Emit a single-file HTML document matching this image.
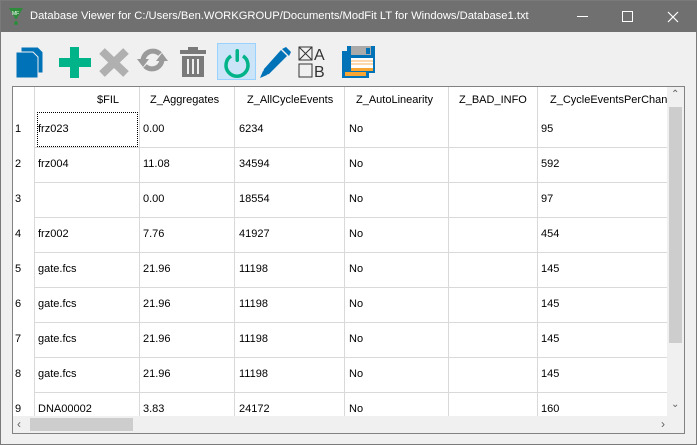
<!DOCTYPE html>
<html><head><style>
*{margin:0;padding:0;box-sizing:border-box}
body{width:697px;height:445px;background:#f0f0f0;font-family:"Liberation Sans",sans-serif;font-size:11px;color:#000;position:relative;overflow:hidden;border:1px solid #7a7a7a}
.title{position:absolute;left:0;top:0;width:697px;height:31px;background:#707070;color:#fff;font-size:11px}
.title span{position:absolute;left:29px;top:9px;font-size:11.2px}
.ic{position:absolute}
.grid{position:absolute;left:11px;top:85px;width:673px;height:348px;border:1px solid #828282;background:#fff;overflow:hidden}
.c{position:absolute;white-space:nowrap}
.vl{position:absolute;width:1px;background:#d9d9d9}
.hl{position:absolute;height:1px;background:#d9d9d9}
</style></head><body>
<div class="title">
<svg class="ic" style="left:7px;top:5px" width="16" height="20"><polygon points="1,2 15,2 8,14" fill="#2e8b3c"/><text x="4" y="9" font-size="5" fill="#fff" font-family="Liberation Sans">MF</text><circle cx="8" cy="17" r="2" fill="#2e8b3c"/></svg>
<span>Database Viewer for C:/Users/Ben.WORKGROUP/Documents/ModFit LT for Windows/Database1.txt</span>
<div class="ic" style="left:576px;top:15px;width:11px;height:1px;background:#fff"></div>
<div class="ic" style="left:621px;top:10px;width:11px;height:11px;border:1px solid #fff"></div>
<svg class="ic" style="left:666px;top:10px" width="12" height="12"><path d="M1 1L11 11M11 1L1 11" stroke="#fff" stroke-width="1.2"/></svg>
</div>
<svg class="ic" style="left:14px;top:45px" width="32" height="33"><path d="M6 1h17l5 5v21H6z" fill="#0072b8" stroke="#f0f0f0" stroke-width="1"/><path d="M1 6h17l5 5v21H1z" fill="#0072b8" stroke="#f0f0f0" stroke-width="1"/></svg>
<svg class="ic" style="left:57px;top:45px" width="34" height="33"><rect x="12" y="1" width="9" height="31" fill="#00b388"/><rect x="1" y="12" width="32" height="9" fill="#00b388"/></svg>
<svg class="ic" style="left:97px;top:46px" width="32" height="31"><path d="M4 4L28 27M28 4L4 27" stroke="#b0b0b0" stroke-width="8"/></svg>
<svg class="ic" style="left:135px;top:46px" width="33" height="27"><path d="M7 15A10 10 0 0 1 24 7" fill="none" stroke="#9a9a9a" stroke-width="5"/><path d="M26 11A10 10 0 0 1 9 19" fill="none" stroke="#9a9a9a" stroke-width="5"/><polygon points="1,12 13,12 7,20" fill="#9a9a9a"/><polygon points="20,14 32,14 26,6" fill="#9a9a9a"/></svg>
<svg class="ic" style="left:178px;top:45px" width="28" height="32"><rect x="9" y="1" width="10" height="3" fill="#7a7a7a"/><rect x="1" y="4" width="26" height="4" fill="#7a7a7a"/><path d="M3 10h22v21H3z" fill="#7a7a7a"/><rect x="8" y="13" width="2" height="15" fill="#f0f0f0"/><rect x="13" y="13" width="2" height="15" fill="#f0f0f0"/><rect x="18" y="13" width="2" height="15" fill="#f0f0f0"/></svg>
<div class="ic" style="left:216px;top:42px;width:39px;height:37px;background:#cce4f7;border:1px solid #99d1ff"></div>
<svg class="ic" style="left:220px;top:45px" width="32" height="32"><path d="M10 10A11 11 0 1 0 22 10" fill="none" stroke="#00b388" stroke-width="3.5"/><rect x="14.5" y="3" width="3.5" height="13" rx="1.7" fill="#00b388"/></svg>
<svg class="ic" style="left:258px;top:45px" width="33" height="33"><path d="M22 4L28 10L10 28L3 30L5 23Z" fill="#0072b8"/><path d="M23 3l4-2 5 5-2 4z" fill="#0072b8"/><path d="M1 32l3-7 4 4z" fill="#0072b8"/></svg>
<svg class="ic" style="left:297px;top:45px" width="32" height="33"><rect x="1" y="1" width="13" height="13" fill="none" stroke="#333"/><path d="M1 1L14 14M14 1L1 14" stroke="#333"/><rect x="1" y="18" width="13" height="13" fill="none" stroke="#333"/><text x="16" y="14" font-size="16" font-family="Liberation Sans" fill="#333">A</text><text x="16" y="31" font-size="16" font-family="Liberation Sans" fill="#333">B</text></svg>
<svg class="ic" style="left:340px;top:44px" width="35" height="35"><rect x="1" y="6" width="27" height="27" fill="#0072b8"/><rect x="6" y="1" width="28" height="27" fill="#0072b8"/><rect x="10" y="1" width="20" height="9" fill="#aaa"/><rect x="25" y="3" width="4" height="6" fill="#0072b8"/><rect x="10" y="13" width="22" height="10" fill="#fff"/><path d="M10 16h22M10 19h22" stroke="#f7b05b"/><rect x="10" y="23" width="22" height="3" fill="#f7a533"/><rect x="4" y="27" width="21" height="4" fill="#f7a533"/></svg>
<div class="grid">
<div class="vl" style="left:21px;top:0;height:330px"></div>
<div class="vl" style="left:126px;top:0;height:330px"></div>
<div class="vl" style="left:221px;top:0;height:330px"></div>
<div class="vl" style="left:331px;top:0;height:330px"></div>
<div class="vl" style="left:435px;top:0;height:330px"></div>
<div class="vl" style="left:524px;top:0;height:330px"></div>
<div class="hl" style="left:22px;top:60px;width:632px"></div>
<div class="hl" style="left:22px;top:95px;width:632px"></div>
<div class="hl" style="left:22px;top:130px;width:632px"></div>
<div class="hl" style="left:22px;top:165px;width:632px"></div>
<div class="hl" style="left:22px;top:200px;width:632px"></div>
<div class="hl" style="left:22px;top:235px;width:632px"></div>
<div class="hl" style="left:22px;top:270px;width:632px"></div>
<div class="hl" style="left:22px;top:305px;width:632px"></div>
<div class="c" style="left:84px;top:7px">$FIL</div>
<div class="c" style="left:137px;top:7px">Z_Aggregates</div>
<div class="c" style="left:234px;top:7px">Z_AllCycleEvents</div>
<div class="c" style="left:343px;top:7px">Z_AutoLinearity</div>
<div class="c" style="left:446px;top:7px">Z_BAD_INFO</div>
<div class="c" style="left:537px;top:7px">Z_CycleEventsPerChan</div>
<div style="position:absolute;left:24px;top:25px;width:101px;height:35px;border:1px dotted #000"></div>
<div style="position:absolute;left:0;top:25px;width:654px;line-height:35px">
<div style="position:relative;height:35px"><span class="c" style="left:2px">1</span><span class="c" style="left:25px">frz023</span><span class="c" style="left:130px">0.00</span><span class="c" style="left:226px">6234</span><span class="c" style="left:336px">No</span><span class="c" style="left:528px">95</span></div>
<div style="position:relative;height:35px"><span class="c" style="left:2px">2</span><span class="c" style="left:25px">frz004</span><span class="c" style="left:130px">11.08</span><span class="c" style="left:226px">34594</span><span class="c" style="left:336px">No</span><span class="c" style="left:528px">592</span></div>
<div style="position:relative;height:35px"><span class="c" style="left:2px">3</span><span class="c" style="left:130px">0.00</span><span class="c" style="left:226px">18554</span><span class="c" style="left:336px">No</span><span class="c" style="left:528px">97</span></div>
<div style="position:relative;height:35px"><span class="c" style="left:2px">4</span><span class="c" style="left:25px">frz002</span><span class="c" style="left:130px">7.76</span><span class="c" style="left:226px">41927</span><span class="c" style="left:336px">No</span><span class="c" style="left:528px">454</span></div>
<div style="position:relative;height:35px"><span class="c" style="left:2px">5</span><span class="c" style="left:25px">gate.fcs</span><span class="c" style="left:130px">21.96</span><span class="c" style="left:226px">11198</span><span class="c" style="left:336px">No</span><span class="c" style="left:528px">145</span></div>
<div style="position:relative;height:35px"><span class="c" style="left:2px">6</span><span class="c" style="left:25px">gate.fcs</span><span class="c" style="left:130px">21.96</span><span class="c" style="left:226px">11198</span><span class="c" style="left:336px">No</span><span class="c" style="left:528px">145</span></div>
<div style="position:relative;height:35px"><span class="c" style="left:2px">7</span><span class="c" style="left:25px">gate.fcs</span><span class="c" style="left:130px">21.96</span><span class="c" style="left:226px">11198</span><span class="c" style="left:336px">No</span><span class="c" style="left:528px">145</span></div>
<div style="position:relative;height:35px"><span class="c" style="left:2px">8</span><span class="c" style="left:25px">gate.fcs</span><span class="c" style="left:130px">21.96</span><span class="c" style="left:226px">11198</span><span class="c" style="left:336px">No</span><span class="c" style="left:528px">145</span></div>
<div style="position:relative;height:35px"><span class="c" style="left:2px">9</span><span class="c" style="left:25px">DNA00002</span><span class="c" style="left:130px">3.83</span><span class="c" style="left:226px">24172</span><span class="c" style="left:336px">No</span><span class="c" style="left:528px">160</span></div>
</div>
<div style="position:absolute;left:654px;top:0;width:17px;height:329px;background:#f0f0f0"></div>
<div style="position:absolute;left:656px;top:20px;width:13px;height:236px;background:#cdcdcd"></div>
<div class="c" style="left:658px;top:2px;font-size:10px;color:#606060">&#8963;</div>
<div class="c" style="left:658px;top:312px;font-size:10px;color:#606060">&#8964;</div>
<div style="position:absolute;left:0;top:329px;width:671px;height:17px;background:#f0f0f0"></div>
<div style="position:absolute;left:17px;top:331px;width:103px;height:13px;background:#cdcdcd"></div>
<div class="c" style="left:4px;top:330px;font-size:12px;color:#606060">&#8249;</div>
<div class="c" style="left:648px;top:330px;font-size:12px;color:#606060">&#8250;</div>
</div>
</body></html>
